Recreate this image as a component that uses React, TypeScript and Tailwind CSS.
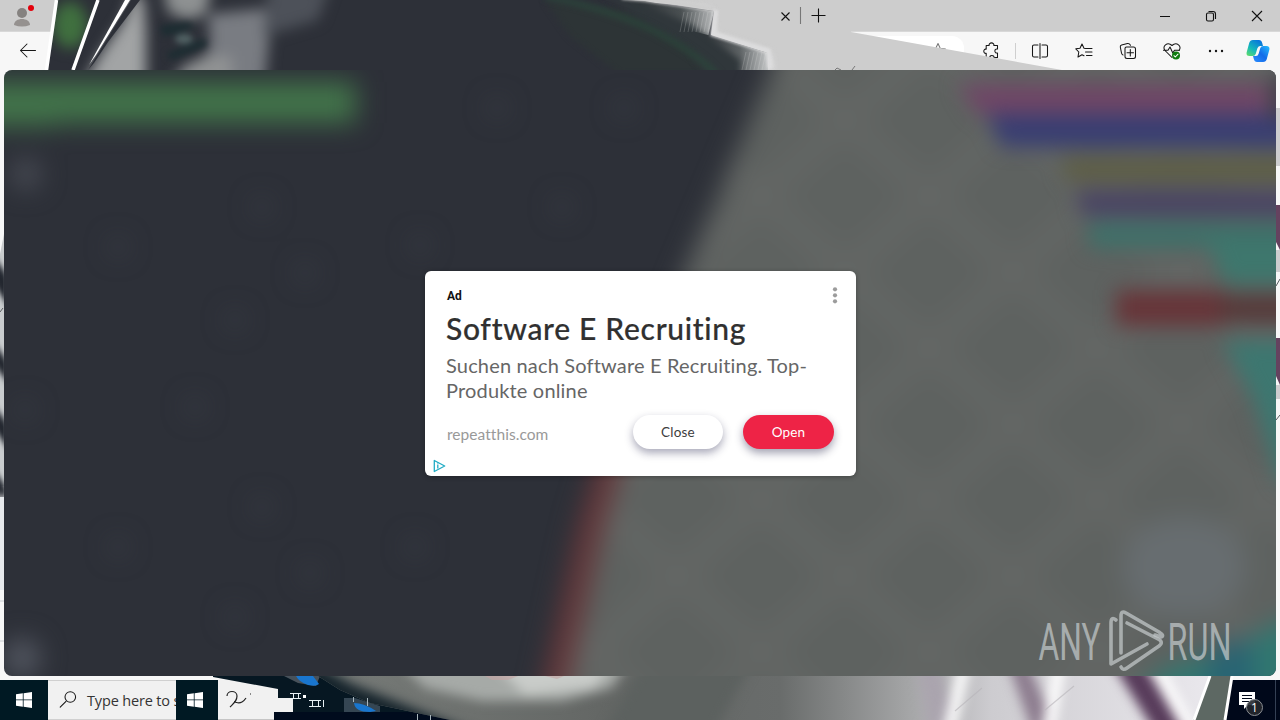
import React from 'react';

interface IconProps {
  children: React.ReactNode;
  className?: string;
}

const Icon: React.FC<IconProps> = ({ children, className = 'w-5 h-5' }) => (
  <svg
    viewBox="0 0 20 20"
    className={`${className} shrink-0`}
    fill="none"
    stroke="#161616"
    strokeWidth="1.05"
    strokeLinecap="round"
    strokeLinejoin="round"
  >
    {children}
  </svg>
);

const STAR = 'M10 2.5L12.2 7.3L17.4 8L13.6 11.5L14.5 16.7L10 14.2L5.5 16.7L6.4 11.5L2.6 8L7.8 7.3Z';

const HeaderArt: React.FC = () => (
  <svg viewBox="0 0 1280 70" className="absolute left-0 top-0 w-[1280px] h-[70px] pointer-events-none">
    <defs>
      <filter id="soft" filterUnits="userSpaceOnUse" x="0" y="-60" width="860" height="200" colorInterpolationFilters="sRGB">
        <feGaussianBlur stdDeviation="7" />
      </filter>
      <filter id="edge" filterUnits="userSpaceOnUse" x="0" y="-60" width="860" height="200" colorInterpolationFilters="sRGB">
        <feGaussianBlur stdDeviation="3" />
      </filter>
      <filter id="rim" filterUnits="userSpaceOnUse" x="0" y="-60" width="860" height="200" colorInterpolationFilters="sRGB">
        <feGaussianBlur stdDeviation="1.6" />
      </filter>
      <clipPath id="headArt">
        <path d="M57 0H645L714 11L711 35L768 53V70H46Z" />
      </clipPath>
      <linearGradient id="upperFringe" x1="640" x2="714" gradientUnits="userSpaceOnUse">
        <stop offset="0" stopColor="#32373b" />
        <stop offset=".55" stopColor="#4a5052" />
        <stop offset="1" stopColor="#b8babb" />
      </linearGradient>
      <linearGradient id="lowerFringe" x1="705" x2="768" gradientUnits="userSpaceOnUse">
        <stop offset="0" stopColor="#34393d" />
        <stop offset=".55" stopColor="#5d6264" />
        <stop offset="1" stopColor="#c3c5c6" />
      </linearGradient>
    </defs>
    <path d="M640 0H851V32L1062 70H740Z" fill="#cdcdcd" />
    <path d="M640 0L712 8L716 34L770 52L774 70H730L690 20Z" fill="#e1e1e2" filter="url(#edge)" />
    <g clipPath="url(#headArt)">
      <path d="M40 0H625L720 9L720 34L780 53V70H40Z" fill="#2d3038" />
      <ellipse cx="70" cy="25" rx="17" ry="23" fill="#40703f" filter="url(#soft)" />
      <path d="M99 0H160V70H74Z" fill="#2d3038" />
      <g filter="url(#soft)">
        <path d="M134 -10L144 0L146 30L146 90H80L100 55L124 20Z" fill="#a2a4a5" />
        <path d="M162 -22H213L206 14L188 20L168 12Z" fill="#8e9192" />
        <path d="M208 14L272 8L264 90H196L210 42Z" fill="#797c82" />
        <path d="M184 66L205 56L232 56V95H164Z" fill="#909293" />
        <path d="M268 -15H330L318 20L264 36Z" fill="#4d5159" />
      </g>
      <g filter="url(#edge)">
        <path d="M160 26L188 22L196 27L176 34L163 36Z" fill="#1d2d32" />
        <path d="M166 54L184 46L205 38L207 46L190 53L172 60Z" fill="#1d2d32" />
        <ellipse cx="184" cy="39" rx="9" ry="5" fill="#5b7071" opacity=".8" />
      </g>
      <path d="M131 0H140L108 42L94 63L88 70Z" fill="#2d3038" />
      <path d="M545 0L630 12L690 45L735 75H620L570 36Z" fill="#2d3436" filter="url(#edge)" />
      <path d="M625 0L645 1L665 5L714 11L708 37L690 31L650 17Z" fill="url(#upperFringe)" />
      <path d="M688 30L712 36L768 53V70H735L716 50Z" fill="url(#lowerFringe)" />
      <path d="M590 -14L650 7L690 24L740 60L740 80H708L690 50L650 25Z" fill="#30373b" filter="url(#edge)" />
      <path d="M545 -4Q620 12 660 34T718 76" stroke="#2b463b" strokeWidth="5" fill="none" filter="url(#edge)" />
    </g>
    <path d="M622 -3L645 -1L714 9" stroke="#cdcdcd" strokeWidth="5" fill="none" filter="url(#rim)" />
    <path d="M716 10L713 34L768 51L770 68" stroke="#dcdcdd" strokeWidth="5" fill="none" filter="url(#rim)" />
    <path d="M56.5 0L46.5 70M98 0L73 70" stroke="#fff" strokeWidth="3.5" />
    <path d="M125 0H130L96 55L89 65Z" fill="#fff" />
    <g stroke="#e6e6e6" strokeWidth="1" opacity=".2">
      {[684, 688, 692, 696, 700, 704, 708, 712].map((x) => (
        <path key={x} d={`M${x} 12L${x - 4} 32`} />
      ))}
      {[746, 750, 754, 758, 762, 766].map((x) => (
        <path key={x} d={`M${x} 52L${x - 4} 70`} />
      ))}
    </g>
    <path d="M835 70L837 68L841 70M852 70L855 66" stroke="#777" fill="none" />
  </svg>
);

const BrowserHeader: React.FC = () => (
  <header className="relative h-[70px] shrink-0 flex flex-col bg-[#f7f7f7]">
    <div className="h-8 flex items-center justify-between bg-[#cdcdcd] border-b border-[#d8d8d8]">
      <svg viewBox="0 0 40 32" className="w-10 h-8">
        <circle cx="22" cy="13" r="5" fill="#858280" />
        <path d="M14 25C14 17 30 17 30 25Q22 28 14 25Z" fill="#95918f" />
        <circle cx="31" cy="8" r="3" fill="#e3000b" />
      </svg>
    </div>
    <div className="flex-1 flex items-center">
      <div className="w-[964px] flex items-center">
        <Icon className="w-5 h-5 ml-[18px]">
          <path d="M17.5 9.5H2.5M9 3L2.5 9.5L9 16" />
        </Icon>
        <div className="ml-auto w-[130px] h-[30px] rounded-r-xl bg-white flex items-center justify-end pr-4">
          <Icon className="w-5 h-5">
            <path d={STAR} stroke="#777" />
          </Icon>
        </div>
      </div>
      <div className="flex items-center pl-[18px]">
        <Icon>
          <path d="M4.2 4.5H7.1C6.4 1 12.6 1 11.9 4.5H15.5V8C12 7.3 12 12.7 15.5 12V16.5H12C12.5 13.8 7.3 13.8 7.8 16.5H4.2V12.3C1 13 1 7.5 4.2 8.2Z" />
        </Icon>
        <span className="w-px h-4 bg-[#cfcfcf] ml-[13px] mr-[14px]"></span>
        <Icon>
          <path d="M8 4H4Q2.5 4 2.5 5.5V14.5Q2.5 16 4 16H8M12 4H16Q17.5 4 17.5 5.5V14.5Q17.5 16 16 16H12M10 2.5V17.5" />
        </Icon>
        <Icon className="w-5 h-5 ml-6">
          <path d="M11.5 7.5L10 7.2L8 3L6 7.2L1.8 7.8L4.8 11L4 16L8 13.7L10 14.8M12 7.5H18M11.5 11H18M12.5 14.5H18" />
        </Icon>
        <Icon className="w-5 h-5 ml-6">
          <path d="M5 14Q3.8 13.7 3.5 12L2.3 6Q2 4.5 3.6 4L9.5 2.6Q11.3 2.3 12.5 4.3M8.5 6H15.5Q17.5 6 17.5 8V15.5Q17.5 17.5 15.5 17.5H9Q7 17.5 7 15.5V7.5Q7 6 8.5 6M12.3 8.5V15M9 11.8H15.5" />
        </Icon>
        <Icon className="w-5 h-5 ml-6">
          <path d="M10 16.5L3 9.5C-.5 5 5.5 .5 10 4.5C14.5 .5 20.5 5 17 9.5M1.5 9.3H6L8 6L10.8 12L12.5 9.3H17.5" />
          <circle cx="14" cy="14.5" r="4" fill="#107c10" stroke="none" />
          <path d="M12 14.7L13.3 16L16 13.2" stroke="white" />
        </Icon>
        <Icon className="w-5 h-5 ml-6">
          <g fill="#161616" stroke="none">
            <circle cx="4" cy="10" r="1.2" />
            <circle cx="10" cy="10" r="1.2" />
            <circle cx="16" cy="10" r="1.2" />
          </g>
        </Icon>
        <svg viewBox="0 0 24 24" className="w-6 h-6 ml-5">
          <defs>
            <linearGradient id="copA" x1="0" y1="1" x2=".7" y2="0">
              <stop stopColor="#65df62" />
              <stop offset=".45" stopColor="#15b9ba" />
              <stop offset="1" stopColor="#0876dc" />
            </linearGradient>
            <linearGradient id="copB" x1="1" y1="0" x2="0" y2="1">
              <stop stopColor="#25bfff" />
              <stop offset=".5" stopColor="#136be8" />
              <stop offset="1" stopColor="#2b8eff" />
            </linearGradient>
          </defs>
          <path d="M7 1H13Q15.5 1 16.2 4L17 7H14Q12 7 11.3 9.5L9.7 15Q9 17 6.8 17H3.5Q0 17 .6 13.5L3.2 4Q4 1 7 1Z" fill="url(#copA)" />
          <path d="M17 23H11Q8.5 23 7.8 20L7 17H10Q12 17 12.7 14.5L14.3 9Q15 7 17.2 7H20.5Q24 7 23.4 10.5L20.8 20Q20 23 17 23Z" fill="url(#copB)" />
        </svg>
      </div>
    </div>
    <HeaderArt />
    <svg viewBox="0 0 500 32" className="absolute left-[780px] top-0 w-[500px] h-8" fill="none" stroke="#111" strokeWidth="1.1">
      <path d="M1.5 12.5L9.5 20.5M9.5 12.5L1.5 20.5M31.5 15.5H45.5M38.5 8.5V22.5" />
      <path d="M20.5 7V24" stroke="#777" />
      <path d="M380 16.5H390M472 11L482 21M482 11L472 21" />
      <rect x="426.5" y="13" width="7" height="8" rx="1.5" />
      <path d="M428.5 11.5H433Q435.5 11.5 435.5 14V19" />
    </svg>
  </header>
);

const StageArt: React.FC = () => (
  <svg viewBox="4 70 1272 606" className="absolute inset-0 w-full h-full">
    <defs>
      <filter id="wide" filterUnits="userSpaceOnUse" x="-60" y="0" width="1420" height="760" colorInterpolationFilters="sRGB">
        <feGaussianBlur stdDeviation="13" />
      </filter>
      <filter id="bands" filterUnits="userSpaceOnUse" x="-60" y="0" width="1420" height="760" colorInterpolationFilters="sRGB">
        <feGaussianBlur stdDeviation="10" />
      </filter>
      <pattern id="tiles" width="168" height="152" patternUnits="userSpaceOnUse" x="761" y="44">
        <path d="M0 0L168 152M168 0L0 152" stroke="#6b6e6d" strokeWidth="26" opacity=".32" />
      </pattern>
    </defs>
    <rect x="4" y="70" width="1272" height="606" fill="#2d3038" />
    <g filter="url(#wide)">
      <path d="M792 20H1330V730H555L575 610L608 470L680 285Z" fill="#5e6260" />
      <path d="M792 20H1330V730H555L608 470L680 285Z" fill="url(#tiles)" />
      <path d="M617 440L590 530L550 710" stroke="#65373a" strokeWidth="25" fill="none" />
      <path d="M-40 82H356V123H60L50 126H-40Z" fill="#42744a" />
      <ellipse cx="26" cy="174" rx="14" ry="15" fill="#4c4f58" />
      <ellipse cx="22" cy="658" rx="18" ry="19" fill="#555963" />
      <g fill="#474a52" opacity=".5">
        {[
          [118, 247], [262, 207], [305, 273], [235, 320], [195, 407], [420, 245],
          [497, 108], [624, 108], [562, 207], [262, 507], [118, 547], [310, 573],
          [235, 617], [415, 547], [25, 410],
        ].map(([x, y]) => (
          <circle key={`${x}-${y}`} cx={x} cy={y} r="9" />
        ))}
      </g>
      <ellipse cx="1184" cy="567" rx="62" ry="50" fill="#676d70" />
      <path d="M1120 710L1165 668L1225 650L1300 612V730H1120Z" fill="#317770" />
      <path d="M1212 647L1252 640V710H1205Z" fill="#286373" />
    </g>
    <g filter="url(#bands)">
      <path d="M958 84H1269V114H977Z" fill="#6f4666" />
      <path d="M986 114H1310V147H1002Z" fill="#393e72" />
      <path d="M1060 157H1310V182H1068Z" fill="#5e5e46" />
      <path d="M1076 190H1310V216H1082Z" fill="#494463" />
      <path d="M1088 222H1310V252H1230L1200 248H1090Z" fill="#3e7069" />
      <path d="M1207 240H1310V284H1225Z" fill="#3e776d" />
      <path d="M1116 290H1226V326H1116Z" fill="#673539" />
      <path d="M1220 295H1310V322H1220Z" fill="#563939" />
      <path d="M1222 340H1310V490L1280 482L1254 400Z" fill="#3d7770" />
      <path d="M1272 75H1290V120H1272Z" fill="#3d3c46" />
    </g>
  </svg>
);

const AdCard: React.FC = () => (
  <section className="relative mt-[201px] ml-[421px] w-[431px] h-[205px] rounded-md bg-white shadow-[0_1px_5px_rgba(0,0,0,.3)] font-['Lato','Liberation_Sans',sans-serif]">
    <div className="h-[45px] flex justify-between pl-[22px] pr-[18px] pt-4">
      <span className="text-[12px] leading-[18px] font-bold text-[#111] font-['Roboto',sans-serif]">Ad</span>
      <svg viewBox="0 0 6 18" className="w-1.5 h-[18px]" fill="#9c9c9c">
        <circle cx="3" cy="2.3" r="2.1" />
        <circle cx="3" cy="8.3" r="2.1" />
        <circle cx="3" cy="14.3" r="2.1" />
      </svg>
    </div>
    <div className="pl-[21px]">
      <h1 className="h-[37px] text-[30px] leading-[25px] font-medium tracking-[0.7px] text-[#303030] whitespace-nowrap [-webkit-text-stroke:0.2px_#303030]">
        Software E Recruiting
      </h1>
      <p className="h-[62px] text-[20px] leading-[25px] tracking-[0.17px] text-[#666] whitespace-nowrap">
        Suchen nach Software E Recruiting. Top-
        <br />
        Produkte online
      </p>
    </div>
    <div className="flex items-start pl-[22px] pr-[22px]">
      <span className="mt-[9px] text-[15.5px] leading-[20px] tracking-[0.05px] text-[#999]">repeatthis.com</span>
      <button className="ml-auto w-[90px] h-[34px] rounded-full bg-white text-[13.5px] tracking-[0.2px] text-[#3d3d3d] shadow-[0_4px_8px_rgba(30,30,70,.38)]">
        Close
      </button>
      <button className="ml-5 w-[91px] h-[34px] rounded-full bg-[#ee2346] text-[13.5px] tracking-[0.2px] text-white shadow-[0_4px_8px_rgba(30,30,70,.42)]">
        Open
      </button>
    </div>
    <svg viewBox="0 0 14 14" className="absolute left-[7px] bottom-[3px] w-3.5 h-3.5" fill="none" stroke="#20acc5" strokeWidth="1.3">
      <path d="M2.3 1.5L12.7 7L2.3 12.5Z" strokeLinejoin="round" />
      <path d="M5.8 5.6V9.4M5.8 3.4V4.4" />
    </svg>
  </section>
);

const Watermark: React.FC = () => (
  <svg viewBox="0 0 200 68" className="absolute left-[1033px] top-[536px] w-[200px] h-[68px] overflow-visible">
    <g fill="#c3c9ca" fillOpacity=".72" fontFamily="Roboto, sans-serif" fontSize="52" fontWeight="400">
      <text x="1.5" y="53.5" textLength="62" lengthAdjust="spacingAndGlyphs">ANY</text>
      <text x="130.5" y="53.5" textLength="64" lengthAdjust="spacingAndGlyphs">RUN</text>
    </g>
    <g fill="none" stroke="#c3c9ca" strokeOpacity=".72" strokeWidth="3.6" strokeLinejoin="round" strokeLinecap="round">
      <path d="M79 14Q74 10 74 17V58L110 38" />
      <path d="M84 47V10Q84 4 89 7L122 26Q128 30 124 31L118 29" />
      <path d="M90 17L121 33Q127 36 122 40L90 62Q86 65 84 61" />
    </g>
  </svg>
);

const WindowsLogo: React.FC = () => (
  <svg viewBox="0 0 16 16" className="w-4 h-4 shrink-0" fill="white">
    <path d="M0 2.3L6.8 1.3V7.5H0ZM7.6 1.2L16 0V7.5H7.6ZM0 8.3H6.8V14.7L0 13.7ZM7.6 8.3H16V16L7.6 14.8Z" />
  </svg>
);

const FooterArt: React.FC = () => (
  <svg viewBox="0 676 1280 44" className="absolute left-0 top-0 w-[1280px] h-11 pointer-events-none">
    <defs>
      <clipPath id="footArt">
        <path d="M318 676H1212L1192 720H450L370 703L340 690Z" />
      </clipPath>
      <linearGradient id="ground" x1="330" x2="1212" gradientUnits="userSpaceOnUse">
        <stop offset="0" stopColor="#777b78" />
        <stop offset=".32" stopColor="#636664" />
        <stop offset=".51" stopColor="#696c6b" />
        <stop offset=".65" stopColor="#a2a3a4" />
        <stop offset=".75" stopColor="#cdccd0" />
        <stop offset="1" stopColor="#eae8ed" />
      </linearGradient>
      <filter id="footBlur" filterUnits="userSpaceOnUse" x="300" y="640" width="980" height="120" colorInterpolationFilters="sRGB">
        <feGaussianBlur stdDeviation="6" />
      </filter>
    </defs>
    <path d="M213 676H330L450 720H274V712H293V698H278V689L213 677Z" fill="#061722" />
    <path d="M274 712H450V720H274Z" fill="#000b1d" />
    <path d="M284 676H320L316 686L298 683Z" fill="#47515a" />
    <path d="M296 676H313L319 684Q316 687 308 685Q299 682 296 676Z" fill="#1976cf" />
    <path d="M344 698H355L380 706V712H344Z" fill="#354653" />
    <path d="M354 703Q364 703 376 711L370 712Q355 712 354 703Z" fill="#1976cf" />
    <g clipPath="url(#footArt)">
      <rect x="310" y="676" width="910" height="44" fill="url(#ground)" />
      <g filter="url(#footBlur)">
        <path d="M385 650H636L612 688L562 701L482 701L425 688Z" fill="#a6aaa7" />
        <path d="M480 650H622L594 688L525 695Z" fill="#c9ccc9" />
        <path d="M650 650H760L710 740H600Z" fill="#5c615f" />
        <path d="M310 660L352 684L395 701L480 735H300Z" fill="#15232b" />
        <path d="M1003 650H1023L1060 740H1035Z" fill="#8d7d8f" />
        <path d="M1104 650H1136L1188 740H1160Z" fill="#573b5a" />
        <path d="M915 650H935L960 740H930Z" fill="#aaa4ae" />
        <path d="M970 640L945 750M1060 660L1045 750M1152 660L1200 750" stroke="#fff" strokeWidth="12" />
      </g>
      <path d="M955 711L982 688M1045 710L1074 686" stroke="#b6b3b8" strokeWidth="1.2" opacity=".6" />
      <path d="M485 676H518L508 680H492ZM545 676H564L557 679Z" fill="#c5a3a3" opacity=".6" />
    </g>
    <path d="M1211 676H1231L1225 720H1193Z" fill="#5d6863" />
    <path d="M1210 676L1194 720M1232 676L1225 720" stroke="white" strokeWidth="3" />
    <path d="M290 693.5H301M290 698.5H301M293.5 694V698M298.5 694V698M309 700.5H321M309 706.5H321M312.5 701V706M318.5 701V706M323.5 700V707" stroke="#e7f0f4" fill="none" />
    <path d="M353.5 697V702M367.5 698V706M417.5 714V720M430.5 715V720" stroke="#a9b6bd" />
    <rect x="303" y="695" width="3" height="3" fill="white" />
  </svg>
);

const Taskbar: React.FC = () => (
  <footer className="relative h-11 shrink-0 bg-[#f7f7f7]">
    <div className="flex h-11 pt-1">
      <div className="w-12 h-10 bg-[#001923] flex items-center justify-center">
        <WindowsLogo />
      </div>
      <div className="w-32 h-10 flex items-center bg-[#f1f1f1] pl-2.5 border-y border-[#d0d0d0] overflow-hidden">
        <Icon>
          <path d="M2.2 17.2L8 11.3" />
          <circle cx="12.3" cy="7" r="5.3" />
        </Icon>
        <span className="ml-[9px] mt-px text-[14.5px] tracking-[-0.16px] text-[#343434] whitespace-nowrap font-['Open_Sans','Noto_Sans',sans-serif]">Type here to s</span>
      </div>
      <div className="w-[42px] h-10 flex items-center bg-[#001923] pl-[11px]">
        <WindowsLogo />
      </div>
      <div className="w-[75px] h-10 flex items-center bg-[#f1f1f1] border-b border-[#c5c5c5] pl-1.5">
        <svg viewBox="0 0 28 24" className="w-7 h-6" fill="none" stroke="#222" strokeWidth="1.2">
          <path d="M3 8C3 2 13 2 13 8C13 13 10 15 6 19M10 14C13 14 14 16 18 14Q20 13 22 10M26 6H27" />
        </svg>
      </div>
      <div className="ml-auto w-[56px] h-10 bg-[#00081a]"></div>
    </div>
    <FooterArt />
    <svg viewBox="0 0 48 40" className="absolute right-0 bottom-0 w-12 h-10">
      <path d="M7 12H23V25H16L12 29V25H7Z" fill="white" />
      <path d="M10 15.5H20M10 18.5H20M10 21.5H17" stroke="#00081a" />
      <circle cx="22.5" cy="27.5" r="8" fill="#25282e" fillOpacity=".9" stroke="#8b8f94" />
      <text x="22.5" y="32" textAnchor="middle" fill="white" fontFamily="Open Sans, sans-serif" fontSize="12">1</text>
      <path d="M43.5 0V40" stroke="#344054" />
    </svg>
  </footer>
);

const SideArt: React.FC = () => (
  <svg viewBox="0 0 1280 606" className="absolute inset-0 w-full h-full">
    <defs>
      <filter id="sideBlur" filterUnits="userSpaceOnUse" x="-10" y="150" width="30" height="400" colorInterpolationFilters="sRGB">
        <feGaussianBlur stdDeviation="1 5" />
      </filter>
    </defs>
    <path d="M0 184L4 164V416H0Z" fill="#c9ccce" />
    <g fill="#23272f" filter="url(#sideBlur)">
      <path d="M-2 192L5 202V232L-2 220ZM-2 278L5 288V309L-2 300ZM-2 341L5 350V375L-2 364ZM-2 405L5 416V427H-2Z" />
    </g>
    <path d="M0 427H4V520H0Z" fill="#e6e9ec" />
    <g fill="#cdcdcf">
      <path d="M1276 38H1280V96H1276ZM1276 180H1280V202H1276ZM1276 315H1280V329H1276Z" />
    </g>
    <path d="M1276 135H1280V180L1276 172ZM1276 268H1280V315L1276 306Z" fill="#65425f" />
    <path d="M1276 216L1280 209M1276 350L1280 345M0 242L3 238" stroke="#5a5d60" />
    <path d="M0 531H4M0 571H4" stroke="#c9ccd0" />
  </svg>
);

const App: React.FC = () => {
  return (
    <div className="w-[1280px] h-[720px] flex flex-col overflow-hidden bg-[#f7f7f7]">
      <BrowserHeader />
      <main className="relative h-[606px] shrink-0 px-1">
        <SideArt />
        <div className="relative h-full flex items-start overflow-hidden rounded-lg">
          <StageArt />
          <AdCard />
          <Watermark />
        </div>
      </main>
      <Taskbar />
    </div>
  );
};

export default App;
